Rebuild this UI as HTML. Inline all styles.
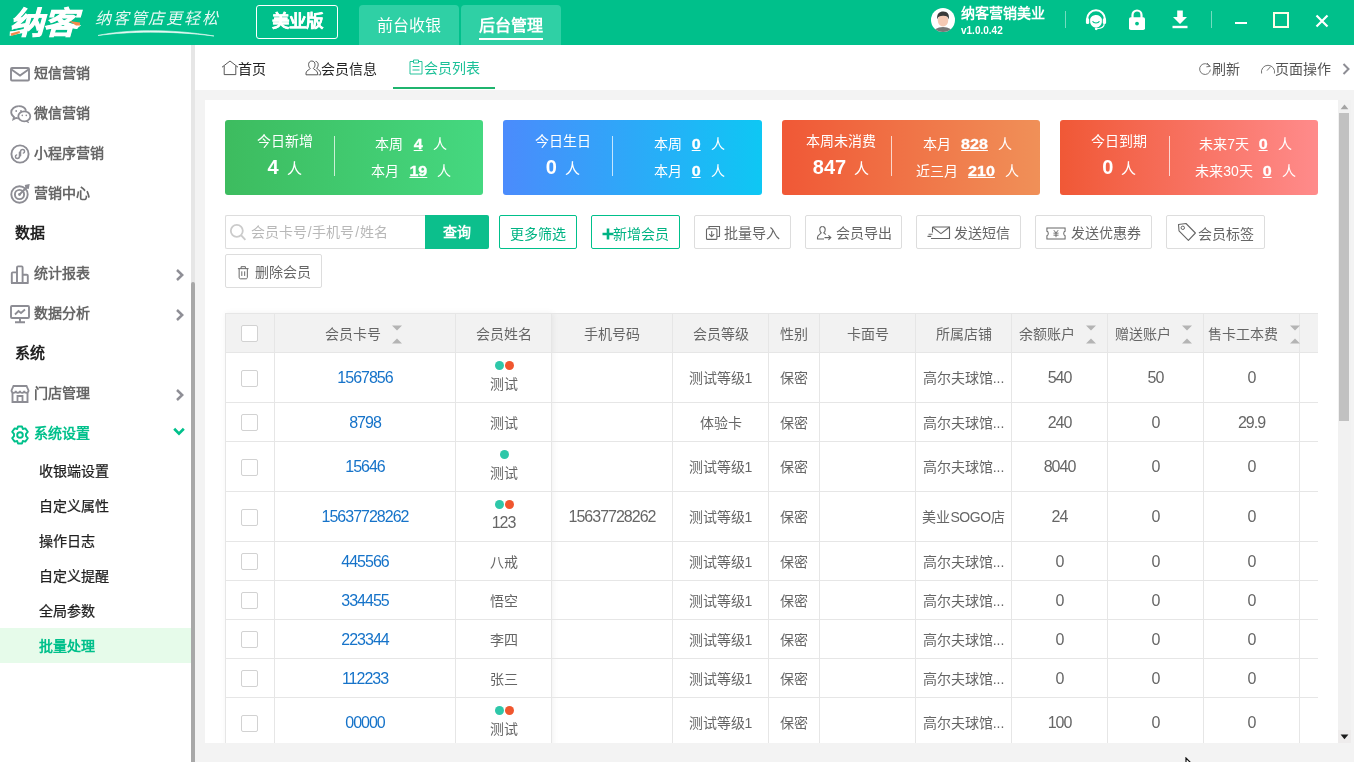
<!DOCTYPE html>
<html lang="zh-CN">
<head>
<meta charset="utf-8">
<title>会员列表</title>
<style>
*{box-sizing:border-box;margin:0;padding:0}
html,body{width:1354px;height:762px;overflow:hidden;background:#f3f3f3;font-family:"Liberation Sans",sans-serif;font-size:14px;color:#666}
.abs{position:absolute}
#top{position:absolute;left:0;top:0;width:1354px;height:45px;background:#00c08b}
#side{position:absolute;left:0;top:45px;width:191px;height:717px;background:#fff}
#split{position:absolute;left:191px;top:45px;width:4px;height:717px;background:#e6e6e6}
#split i{position:absolute;left:0;top:237px;width:4px;height:481px;background:#a8a8a8;border-radius:2px 2px 0 0}
#tabs{position:absolute;left:195px;top:45px;width:1159px;height:45px;background:#fff}
#panel{position:absolute;left:205px;top:100px;width:1133px;height:643px;background:#fff;overflow:hidden}
#vsb{position:absolute;left:1338px;top:100px;width:13px;height:643px;background:#f1f1f1}
#vsb i{position:absolute;left:1px;top:13px;width:10px;height:308px;background:#c1c1c1}
/* top */
.ver{position:absolute;left:256px;top:5px;width:82px;height:34px;border:1px solid #fff;border-radius:3px;color:#fff;font-size:17.5px;font-weight:bold;text-align:center;line-height:31px;-webkit-text-stroke:.3px #fff}
.ttab{position:absolute;top:5px;width:100px;height:40px;background:#2fd0a5;border-radius:4px 4px 0 0;color:#fff;font-size:16px;text-align:center;line-height:42px}
/* side menu */
.mi{position:absolute;left:0;width:191px;height:40px;line-height:40px;font-size:14px;font-weight:bold;color:#666;padding-left:34px}
.mi svg{position:absolute;left:10px;top:11px}
.mh{position:absolute;left:15px;font-size:15px;font-weight:bold;color:#222;height:40px;line-height:40px}
.sub{-webkit-text-stroke:.25px;position:absolute;left:0;width:191px;height:35px;line-height:35px;font-size:14px;color:#222;padding-left:39px;font-weight:500}
.chev{position:absolute;left:175px}
/* cards */
.card{position:absolute;top:20px;height:75px;width:258.25px;border-radius:3px;color:#fff}
.card .l1{position:absolute;left:0;width:119px;text-align:center;top:11px;font-size:14px;line-height:20px}
.card .l2{position:absolute;left:0;width:119px;text-align:center;top:34px;font-size:15px;line-height:26px}
.card .l2 b{font-size:20px;margin-right:8px}
.card .dv{position:absolute;left:109px;top:16px;width:1px;height:40px;background:rgba(255,255,255,.72)}
.card .r{position:absolute;left:112px;width:148px;text-align:center;font-size:14px;line-height:20px}
.card .r b{font-size:15px;text-decoration:underline;margin:0 10.5px;display:inline-block;transform:scaleX(1.07);-webkit-text-stroke:.3px #fff}
/* buttons */
.btn{position:absolute;height:34px;border:1px solid #ddd;border-radius:2px;background:#fff;color:#666;font-size:14px;line-height:32px;text-align:center}
.btn.g{border-color:#00c08b;color:#00b383}
/* table */
.th,.td{position:absolute;text-align:center;font-size:14px;color:#666;overflow:hidden;white-space:nowrap}
a{color:#1673c9;text-decoration:none}
.n{font-size:16px;letter-spacing:-1px}
#panel,#side,#tabs,#top{will-change:transform}
</style>
</head>
<body>
<div id="top">
<div class="abs" id="logo" style="left:9px;top:4px;width:80px;height:40px;color:#fff;font-size:31px;font-weight:900;font-style:italic;line-height:40px;letter-spacing:-1px;white-space:nowrap;transform:scaleX(1.12);transform-origin:0 0;-webkit-text-stroke:0.8px #fff">纳客</div>
<svg class="abs" style="left:0;top:0" width="230" height="45" viewBox="0 0 230 45">
<path d="M10.5 33.5 L19.5 31 L20 33 L11.5 36 Z" fill="#f58a4b"/>
<path d="M69 21 L80 22.5 L80 25.5 L76 25.5 Z" fill="#f58a4b"/>
<path d="M98 35.5 C125 29.5 170 28.5 214 36 C170 30.5 128 31.5 98 35.5 Z" fill="#fff" stroke="#fff" stroke-width=".6" opacity=".9"/>
</svg>
<div class="abs" style="left:95px;top:7.5px;width:130px;height:22px;color:#fff;font-size:16px;font-style:italic;line-height:22px;letter-spacing:1.8px;white-space:nowrap;font-weight:300;opacity:.9">纳客管店更轻松</div>
<div class="ver">美业版</div>
<div class="ttab" style="left:359px">前台收银</div>
<div class="ttab" style="left:461px;font-weight:bold"><span style="border-bottom:2px solid #fff;padding-bottom:4px">后台管理</span></div>
<!-- avatar -->
<svg class="abs" style="left:930px;top:7px" width="26" height="26" viewBox="0 0 26 26">
<defs><clipPath id="avc"><circle cx="13" cy="13" r="12"/></clipPath></defs>
<circle cx="13" cy="13" r="12" fill="#fff"/>
<g clip-path="url(#avc)">
<ellipse cx="13" cy="27" rx="10.5" ry="7" fill="#777"/>
<ellipse cx="13" cy="13.5" rx="5.2" ry="6" fill="#f6c9b4"/>
<path d="M7.2 12.5 C6.5 6 10 4.2 13.5 4.4 C17.5 4.6 19.6 7 18.8 12.5 C18 9.5 16.5 8.7 13 8.8 C9.8 8.8 8 9.5 7.2 12.5Z" fill="#3a3a3a"/>
</g>
</svg>
<div class="abs" style="left:961px;top:3px;color:#fff;font-size:14px;font-weight:bold;line-height:20px;white-space:nowrap">纳客营销美业</div>
<div class="abs" style="left:961px;top:24px;color:#fff;font-size:10px;line-height:14px;white-space:nowrap;font-weight:bold">v1.0.0.42</div>
<div class="abs" style="left:1065px;top:11px;width:1px;height:17px;background:rgba(255,255,255,.45)"></div>
<div class="abs" style="left:1211px;top:11px;width:1px;height:17px;background:rgba(255,255,255,.45)"></div>
<!-- headset -->
<svg class="abs" style="left:1085px;top:8.5px" width="22" height="22.5" viewBox="0 0 24 24">
<path d="M2.2 13.5 V11 A9.8 9.8 0 0 1 21.8 11 V13.5" fill="none" stroke="#fff" stroke-width="2.2"/>
<rect x="1" y="9.8" width="3.6" height="6.4" rx="1.6" fill="#fff"/>
<rect x="19.4" y="9.8" width="3.6" height="6.4" rx="1.6" fill="#fff"/>
<path d="M5.6 10.5 C7 7 10 6.2 12 6.2 C15.5 6.2 17.6 8.2 18.4 10.5 L18.4 14 C18 17.8 15 20 12 20 C9 20 6 17.8 5.6 14 Z" fill="#fff"/>
<path d="M8.2 13.2 C9.5 15.6 14.5 15.6 15.8 13.2" fill="none" stroke="#00c08b" stroke-width="1.2"/>
<path d="M21 15.5 C21 19.5 18 21 13 21.3" fill="none" stroke="#fff" stroke-width="1.3"/>
<circle cx="12.2" cy="21.4" r="1.5" fill="#fff"/>
</svg>
<!-- lock -->
<svg class="abs" style="left:1128px;top:8px" width="18" height="24" viewBox="0 0 18 24">
<path d="M4.5 10 V7 A4.5 4.5 0 0 1 13.5 7 V10" fill="none" stroke="#fff" stroke-width="2.2"/>
<rect x="1" y="9.3" width="16" height="12.7" rx="1.8" fill="#fff"/>
<circle cx="9" cy="15.6" r="1.9" fill="#00c08b"/>
</svg>
<!-- download -->
<svg class="abs" style="left:1171px;top:10px" width="18" height="20" viewBox="0 0 18 20">
<path d="M6.2 0.5 H11.8 V7 H16 L9 14 L2 7 H6.2 Z" fill="#fff"/>
<rect x="1.5" y="15.8" width="15" height="2.4" fill="#fff"/>
</svg>
<!-- window controls -->
<div class="abs" style="left:1235px;top:22px;width:12px;height:2px;background:#fff"></div>
<div class="abs" style="left:1273px;top:12px;width:16px;height:16px;border:2px solid #fdfee8"></div>
<svg class="abs" style="left:1314.6px;top:14.4px" width="14" height="14" viewBox="0 0 14 14"><path d="M1.5 1.5 L12.5 12.5 M12.5 1.5 L1.5 12.5" stroke="#fff" stroke-width="2.2" fill="none"/></svg>
</div>
<div id="side"><div class="mi" style="top:8px;color:#666"><svg width="20" height="20" viewBox="0 0 20 20"><rect x="1" y="4" width="18" height="12.5" rx="1" fill="none" stroke="#8d8d94" stroke-width="1.9"/><path d="M1.5 5.5 L10 11.5 L18.5 5.5" fill="none" stroke="#8d8d94" stroke-width="1.9"/></svg>短信营销</div><div class="mi" style="top:48px;color:#666"><svg width="22" height="20" viewBox="0 0 22 20"><path d="M8.8 2.2 C4.6 2.2 1.2 4.9 1.2 8.3 C1.2 10.2 2.3 11.9 4 13 L3.4 15.2 L6 13.9 C6.6 14.1 7.2 14.2 7.9 14.3" fill="none" stroke="#8d8d94" stroke-width="1.8"/><path d="M8.8 2.2 C12.3 2.2 15.2 4.1 16.1 6.7" fill="none" stroke="#8d8d94" stroke-width="1.8"/><ellipse cx="14.3" cy="12.3" rx="6" ry="5" fill="#fff" stroke="#8d8d94" stroke-width="1.8"/><path d="M17.2 16.6 L18.6 18.6 L16 17.3" fill="#8d8d94" stroke="#8d8d94" stroke-width="1"/><circle cx="6.2" cy="7" r=".9" fill="#8d8d94"/><circle cx="11" cy="7" r=".9" fill="#8d8d94"/><circle cx="12.3" cy="11.4" r=".8" fill="#8d8d94"/><circle cx="16.3" cy="11.4" r=".8" fill="#8d8d94"/></svg>微信营销</div><div class="mi" style="top:88px;color:#666"><svg width="20" height="20" viewBox="0 0 20 20"><circle cx="10" cy="10" r="8.6" fill="none" stroke="#8d8d94" stroke-width="1.9"/><path d="M6.6 10.9 C4.9 11.4 5 14.4 7.2 14.4 C8.6 14.4 9.5 13.4 9.5 12.2 V8.2 M13.4 9.1 C15.1 8.6 15 5.6 12.8 5.6 C11.4 5.6 10.5 6.6 10.5 7.8 V11.8" fill="none" stroke="#8d8d94" stroke-width="1.5" stroke-linecap="round"/></svg>小程序营销</div><div class="mi" style="top:128px;color:#666"><svg width="20" height="20" viewBox="0 0 20 20"><circle cx="9.5" cy="10.5" r="8.2" fill="none" stroke="#8d8d94" stroke-width="1.9"/><circle cx="9.5" cy="10.5" r="4.6" fill="none" stroke="#8d8d94" stroke-width="1.9"/><circle cx="9.5" cy="10.5" r="1.4" fill="#8d8d94"/><path d="M9.5 10.5 L17.5 2.5 M15 2 L18.5 1.2 L17.8 4.8" fill="none" stroke="#8d8d94" stroke-width="1.9"/></svg>营销中心</div><div class="mh" style="top:168px">数据</div><div class="mi" style="top:208px;color:#666"><svg width="20" height="20" viewBox="0 0 20 20"><path d="M1.8 19 V9.4 Q1.8 8.4 2.8 8.4 H7 M7 19 V3.4 Q7 2.4 8 2.4 H11.6 Q12.6 2.4 12.6 3.4 V19 M12.6 10.8 H16.8 Q17.8 10.8 17.8 11.8 V19 M1 19 H18.6" fill="none" stroke="#8d8d94" stroke-width="1.9"/></svg>统计报表</div><svg class="abs" style="left:175px;top:223.5px" width="10" height="12" viewBox="0 0 10 12"><path d="M2 1 L7.2 6 L2 11" fill="none" stroke="#8f8f96" stroke-width="2.5"/></svg><div class="mi" style="top:248px;color:#666"><svg width="20" height="20" viewBox="0 0 20 20"><rect x="1" y="2" width="18" height="12" rx="1" fill="none" stroke="#8d8d94" stroke-width="1.9"/><path d="M10 14 V18 M5 18.3 H15" fill="none" stroke="#8d8d94" stroke-width="1.9"/><path d="M5 10.5 L8.5 7 L11 9 L15 5.5" fill="none" stroke="#8d8d94" stroke-width="1.8"/></svg>数据分析</div><svg class="abs" style="left:175px;top:263.5px" width="10" height="12" viewBox="0 0 10 12"><path d="M2 1 L7.2 6 L2 11" fill="none" stroke="#8f8f96" stroke-width="2.5"/></svg><div class="mh" style="top:288px">系统</div><div class="mi" style="top:328px;color:#666"><svg width="20" height="20" viewBox="0 0 20 20"><path d="M2.5 9 V18 H17.5 V9" fill="none" stroke="#8d8d94" stroke-width="1.9"/><path d="M3.5 2 H16.5 L18.5 6.5 C18.5 9.5 14.3 9.5 14.3 6.8 C14.3 9.5 10 9.5 10 6.8 C10 9.5 5.7 9.5 5.7 6.8 C5.7 9.5 1.5 9.5 1.5 6.5 Z" fill="none" stroke="#8d8d94" stroke-width="1.8"/><path d="M7.5 18 V12 H12.5 V18" fill="none" stroke="#8d8d94" stroke-width="1.8"/></svg>门店管理</div><svg class="abs" style="left:175px;top:343.5px" width="10" height="12" viewBox="0 0 10 12"><path d="M2 1 L7.2 6 L2 11" fill="none" stroke="#8f8f96" stroke-width="2.5"/></svg><div class="mi" style="top:368px;color:#00c08b"><svg style="top:12px" width="20" height="20" viewBox="0 0 20 20"><path d="M8 1.5 H12 L12.8 4 L15.3 3.4 L17.8 6.8 L16 8.8 L16 11.2 L17.8 13.2 L15.3 16.6 L12.8 16 L12 18.5 H8 L7.2 16 L4.7 16.6 L2.2 13.2 L4 11.2 L4 8.8 L2.2 6.8 L4.7 3.4 L7.2 4 Z" fill="none" stroke="#00c08b" stroke-width="1.9" stroke-linejoin="round"/><circle cx="10" cy="10" r="2.8" fill="none" stroke="#00c08b" stroke-width="1.9"/></svg>系统设置</div><svg class="abs" style="left:173px;top:382px" width="12" height="10" viewBox="0 0 12 10"><path d="M1.2 1.8 L6 6.6 L10.8 1.8" fill="none" stroke="#00c08b" stroke-width="2.7"/></svg><div class="sub" style="top:408.5px">收银端设置</div><div class="sub" style="top:443.5px">自定义属性</div><div class="sub" style="top:478.5px">操作日志</div><div class="sub" style="top:513.5px">自定义提醒</div><div class="sub" style="top:548.5px">全局参数</div><div class="sub" style="top:583px;background:#e6fbea;color:#00c08b;font-weight:bold;-webkit-text-stroke:0;line-height:36px">批量处理</div></div>
<div id="split"><i></i></div>
<div id="tabs"><svg class="abs" style="left:26px;top:15px" width="18" height="16" viewBox="0 0 18 16"><path d="M1 7.2 L9 1 L17 7.2 M3.2 6 V14.6 H14.8 V6" fill="none" stroke="#444" stroke-width="0.9"/></svg><div class="abs" style="left:43px;top:13px;line-height:22px;color:#222;white-space:nowrap">首页</div><svg class="abs" style="left:110px;top:15px" width="17" height="16" viewBox="0 0 17 16"><path d="M6.8 1 C4.6 1 3.6 2.6 3.6 4.6 C3.6 6.2 4.2 7.6 5.2 8.4 C5.2 9.6 1 10.4 1 13 V14.8 H12.6 V13 C12.6 10.4 8.4 9.6 8.4 8.4 C9.4 7.6 10 6.2 10 4.6 C10 2.6 9 1 6.8 1 Z" fill="none" stroke="#444" stroke-width="0.9"/><path d="M10.6 1.4 C12.6 1.6 13.2 3.2 13.2 4.8 C13.2 6.2 12.6 7.4 11.8 8.2 C11.8 9.4 15.6 10.2 15.6 12.8 V14.8 H13.6" fill="none" stroke="#444" stroke-width="0.9"/></svg><div class="abs" style="left:126px;top:13px;line-height:22px;color:#222;white-space:nowrap">会员信息</div><svg class="abs" style="left:214px;top:14px" width="14" height="16" viewBox="0 0 14 16"><path d="M4.5 2.5 H1 V15 H13 V2.5 H9.5 M4.5 4 V1 H9.5 V4 Z M3.5 7.5 H10.5 M3.5 11 H10.5" fill="none" stroke="#1cc198" stroke-width="0.95"/></svg><div class="abs" style="left:229px;top:12px;line-height:22px;color:#1cc198;white-space:nowrap">会员列表</div><div class="abs" style="left:198px;top:42px;width:102px;height:2px;background:#1fb46e"></div><svg class="abs" style="left:1003px;top:17px" width="14" height="14" viewBox="0 0 14 14"><path d="M11.6 4.2 A5.4 5.4 0 1 0 12.4 7.6" fill="none" stroke="#666" stroke-width="0.9"/><path d="M9 1 L12.2 4.4 L8.4 4.8" fill="none" stroke="#666" stroke-width="0.9"/></svg><div class="abs" style="left:1017px;top:13px;line-height:22px;color:#555;white-space:nowrap">刷新</div><svg class="abs" style="left:1065px;top:17px" width="16" height="12" viewBox="0 0 16 12"><path d="M1.6 11.5 A6.6 6.6 0 1 1 14.4 11.5" fill="none" stroke="#666" stroke-width="0.9"/><path d="M7 8.6 L10.6 4.6" fill="none" stroke="#666" stroke-width="0.9"/></svg><div class="abs" style="left:1080px;top:13px;line-height:22px;color:#555;white-space:nowrap">页面操作</div><svg class="abs" style="left:1146px;top:17px" width="10" height="14" viewBox="0 0 10 14"><path d="M2.5 2 L7.5 7 L2.5 12" fill="none" stroke="#8d8d94" stroke-width="2"/></svg></div>
<div id="panel"><div class="card" style="left:20px;background:linear-gradient(90deg,#3dbc5f,#45d880)"><div class="l1">今日新增</div><div class="l2"><b>4</b>人</div><div class="dv"></div><div class="r" style="top:14px">本周<b>4</b>人</div><div class="r" style="top:41px">本月<b>19</b>人</div></div><div class="card" style="left:298.25px;background:linear-gradient(90deg,#4b8bfc,#0ec7f4)"><div class="l1">今日生日</div><div class="l2"><b>0</b>人</div><div class="dv"></div><div class="r" style="top:14px">本周<b>0</b>人</div><div class="r" style="top:41px">本月<b>0</b>人</div></div><div class="card" style="left:576.5px;background:linear-gradient(90deg,#f05836,#f09058)"><div class="l1">本周未消费</div><div class="l2"><b>847</b>人</div><div class="dv"></div><div class="r" style="top:14px">本月<b>828</b>人</div><div class="r" style="top:41px">近三月<b>210</b>人</div></div><div class="card" style="left:854.75px;background:linear-gradient(90deg,#f05836,#ff8b8b)"><div class="l1">今日到期</div><div class="l2"><b>0</b>人</div><div class="dv"></div><div class="r" style="top:14px">未来7天<b>0</b>人</div><div class="r" style="top:41px">未来30天<b>0</b>人</div></div><div class="abs" style="left:20px;top:115px;width:201px;height:34px;border:1px solid #ddd;border-right:none;border-radius:2px 0 0 2px;background:#fff"></div><svg class="abs" style="left:24px;top:123px" width="18" height="18" viewBox="0 0 18 18"><circle cx="7.8" cy="7.8" r="6" fill="none" stroke="#cbcbcb" stroke-width="1.8"/><path d="M12 12.2 L16.4 16.8" stroke="#cbcbcb" stroke-width="1.9" fill="none"/></svg><div class="abs" style="left:46px;top:121px;line-height:22px;color:#b8b8b8;white-space:nowrap">会员卡号<span style="margin:0 .8px">/</span>手机号<span style="margin:0 .8px">/</span>姓名</div><div class="abs" style="left:220px;top:115px;width:64px;height:34px;background:#0cbf8c;border-radius:0 2px 2px 0;color:#fff;font-weight:bold;text-align:center;line-height:34px">查询</div><div class="btn g" style="left:294px;top:115px;width:78px"><span style="position:relative;top:2px">更多筛选</span></div><div class="btn g" style="left:386px;top:115px;width:89px"><svg style="position:absolute;left:10px;top:12px" width="12" height="12" viewBox="0 0 12 12"><path d="M6 0.5 V11.5 M0.5 6 H11.5" stroke="#00b383" stroke-width="2.6"/></svg><span style="position:absolute;left:21px;top:2px">新增会员</span></div><div class="btn " style="left:489px;top:115px;width:97px"><svg style="position:absolute;left:10px;top:9px" width="16" height="16" viewBox="0 0 16 16"><path d="M4 3.5 V1.5 H14.5 V11.5 H12" fill="none" stroke="#666" stroke-width="1.1"/><rect x="1.5" y="3.8" width="10.4" height="10.6" rx="1" fill="none" stroke="#666" stroke-width="1.1"/><path d="M6.7 6 V11.6 M4.2 9.2 L6.7 11.8 L9.2 9.2" fill="none" stroke="#666" stroke-width="1.1"/></svg><span style="position:absolute;left:29px;top:1px">批量导入</span></div><div class="btn " style="left:600px;top:115px;width:97px"><svg style="position:absolute;left:10px;top:9px" width="16" height="16" viewBox="0 0 16 16"><path d="M6.5 1.5 C4.6 1.5 3.8 3 3.8 4.6 C3.8 6 4.4 7.2 5.2 7.8 C5.2 9 1.5 9.6 1.5 12.4 V14 H8" fill="none" stroke="#666" stroke-width="1.1"/><path d="M6.5 1.5 C8.4 1.5 9.2 3 9.2 4.6 C9.2 6 8.6 7.2 7.8 7.8 C7.8 8.6 9 9 10 9.4" fill="none" stroke="#666" stroke-width="1.1"/><path d="M8.5 12.6 H14.6 M12.4 10.4 L14.8 12.6 L12.4 14.8" fill="none" stroke="#666" stroke-width="1.1"/></svg><span style="position:absolute;left:30px;top:1px">会员导出</span></div><div class="btn " style="left:711px;top:115px;width:105px"><svg style="position:absolute;left:10px;top:9px" width="24" height="16" viewBox="0 0 24 16"><path d="M5.5 2 H22.5 V13.5 H4 M5.5 2 V7.5" fill="none" stroke="#666" stroke-width="1.1"/><path d="M5.8 2.3 L14 8.6 L22.2 2.3" fill="none" stroke="#666" stroke-width="1.1"/><path d="M1.5 9.2 H5.5 M0.5 11.4 H4.2" fill="none" stroke="#666" stroke-width="1.1"/></svg><span style="position:absolute;left:37px;top:1px">发送短信</span></div><div class="btn " style="left:830px;top:115px;width:117px"><svg style="position:absolute;left:10px;top:10.5px" width="20" height="13" viewBox="0 0 22 14" preserveAspectRatio="none"><path d="M1 1 H21 V4.6 C19 5 19 9 21 9.4 V13 H1 V9.4 C3 9 3 5 1 4.6 Z" fill="none" stroke="#666" stroke-width="1.1"/><path d="M8.6 3.4 L11 6.4 L13.4 3.4 M11 6.4 V11 M8.2 6.6 H13.8 M8.2 8.8 H13.8" fill="none" stroke="#666" stroke-width="1"/></svg><span style="position:absolute;left:34.5px;top:1px">发送优惠券</span></div><div class="btn " style="left:961px;top:115px;width:99px"><svg style="position:absolute;left:10px;top:6px" width="20" height="20" viewBox="0 0 20 20"><path d="M1.5 2.5 L9 1.5 L18.4 11 L11.4 18.4 L2 8.8 Z" fill="none" stroke="#666" stroke-width="1.1" stroke-linejoin="round"/><circle cx="5.8" cy="5.8" r="1.7" fill="none" stroke="#666" stroke-width="1"/></svg><span style="position:absolute;left:31px;top:2px">会员标签</span></div><div class="btn " style="left:20px;top:154px;width:97px"><svg style="position:absolute;left:11px;top:9.5px" width="12.5" height="15.5" viewBox="0 0 14 16"><path d="M1 3.4 H13 M4.6 3.2 V1.2 H9.4 V3.2 M2.4 3.6 V13 C2.4 14.2 3 14.8 4 14.8 H10 C11 14.8 11.6 14.2 11.6 13 V3.6 M5.4 6.4 V11.6 M8.6 6.4 V11.6" fill="none" stroke="#666" stroke-width="1.1"/></svg><span style="position:absolute;left:29px;top:1px">删除会员</span></div><div class="abs" style="left:20px;top:213px;width:1093px;height:40px;background:#f2f2f2"></div><div class="abs" style="left:20px;top:213px;width:327px;height:440px;box-shadow:1px 0 6px rgba(0,0,0,.06)"></div><div class="abs" style="left:21px;top:253px;width:325px;height:440px;background:#fff"></div><div class="abs" style="left:20px;top:213px;width:1093px;height:1px;background:#e6e6e6"></div><div class="abs" style="left:20px;top:252px;width:1093px;height:1px;background:#e6e6e6"></div><div class="abs" style="left:20px;top:302px;width:1093px;height:1px;background:#e6e6e6"></div><div class="abs" style="left:20px;top:341px;width:1093px;height:1px;background:#e6e6e6"></div><div class="abs" style="left:20px;top:391px;width:1093px;height:1px;background:#e6e6e6"></div><div class="abs" style="left:20px;top:441px;width:1093px;height:1px;background:#e6e6e6"></div><div class="abs" style="left:20px;top:480px;width:1093px;height:1px;background:#e6e6e6"></div><div class="abs" style="left:20px;top:519px;width:1093px;height:1px;background:#e6e6e6"></div><div class="abs" style="left:20px;top:558px;width:1093px;height:1px;background:#e6e6e6"></div><div class="abs" style="left:20px;top:597px;width:1093px;height:1px;background:#e6e6e6"></div><div class="abs" style="left:20px;top:647px;width:1093px;height:1px;background:#e6e6e6"></div><div class="abs" style="left:20px;top:213px;width:1px;height:440px;background:#e6e6e6"></div><div class="abs" style="left:69px;top:213px;width:1px;height:440px;background:#e6e6e6"></div><div class="abs" style="left:250px;top:213px;width:1px;height:440px;background:#e6e6e6"></div><div class="abs" style="left:346px;top:213px;width:1px;height:440px;background:#e6e6e6"></div><div class="abs" style="left:467px;top:213px;width:1px;height:440px;background:#e6e6e6"></div><div class="abs" style="left:563px;top:213px;width:1px;height:440px;background:#e6e6e6"></div><div class="abs" style="left:614px;top:213px;width:1px;height:440px;background:#e6e6e6"></div><div class="abs" style="left:710px;top:213px;width:1px;height:440px;background:#e6e6e6"></div><div class="abs" style="left:806px;top:213px;width:1px;height:440px;background:#e6e6e6"></div><div class="abs" style="left:902px;top:213px;width:1px;height:440px;background:#e6e6e6"></div><div class="abs" style="left:998px;top:213px;width:1px;height:440px;background:#e6e6e6"></div><div class="abs" style="left:1094px;top:213px;width:1px;height:440px;background:#e6e6e6"></div><div class="abs" style="left:36px;top:225.0px;width:17px;height:17px;border:1px solid #d2d2d2;border-radius:2px;background:#fff"></div><div class="th" style="left:119.5px;top:222.5px;width:58px;text-align:left;line-height:22px;overflow:visible">会员卡号</div><svg class="abs" style="left:187.0px;top:225.0px" width="10" height="19" viewBox="0 0 10 19"><path d="M0 0.5 H10 L5 5.5 Z M0 18.5 H10 L5 13.5 Z" fill="#b4b4b4"/></svg><div class="th" style="left:251px;top:222.5px;width:95px;line-height:22px">会员姓名</div><div class="th" style="left:347px;top:222.5px;width:120px;line-height:22px">手机号码</div><div class="th" style="left:468px;top:222.5px;width:95px;line-height:22px">会员等级</div><div class="th" style="left:564px;top:222.5px;width:50px;line-height:22px">性别</div><div class="th" style="left:615px;top:222.5px;width:95px;line-height:22px">卡面号</div><div class="th" style="left:711px;top:222.5px;width:95px;line-height:22px">所属店铺</div><div class="th" style="left:813.5px;top:222.5px;width:58px;text-align:left;line-height:22px;overflow:visible">余额账户</div><svg class="abs" style="left:881.0px;top:225.0px" width="10" height="19" viewBox="0 0 10 19"><path d="M0 0.5 H10 L5 5.5 Z M0 18.5 H10 L5 13.5 Z" fill="#b4b4b4"/></svg><div class="th" style="left:909.5px;top:222.5px;width:58px;text-align:left;line-height:22px;overflow:visible">赠送账户</div><svg class="abs" style="left:977.0px;top:225.0px" width="10" height="19" viewBox="0 0 10 19"><path d="M0 0.5 H10 L5 5.5 Z M0 18.5 H10 L5 13.5 Z" fill="#b4b4b4"/></svg><div class="th" style="left:1003.0px;top:222.5px;width:72px;text-align:left;line-height:22px;overflow:visible">售卡工本费</div><svg class="abs" style="left:1084.5px;top:225.0px" width="10" height="19" viewBox="0 0 10 19"><path d="M0 0.5 H10 L5 5.5 Z M0 18.5 H10 L5 13.5 Z" fill="#b4b4b4"/></svg><div class="abs" style="left:36px;top:269.5px;width:17px;height:17px;border:1px solid #d2d2d2;border-radius:2px;background:#fff"></div><div class="td n" style="left:70px;top:267.0px;width:180px;line-height:21px;"><a>1567856</a></div><div class="abs" style="left:289.5px;top:261px;width:9px;height:9px;border-radius:50%;background:#2ec7a9"></div><div class="abs" style="left:299.5px;top:261px;width:9px;height:9px;border-radius:50%;background:#f0562e"></div><div class="td" style="left:251px;top:273px;width:95px;line-height:22px;">测试</div><div class="td" style="left:347px;top:267.0px;width:120px;line-height:22px;"></div><div class="td" style="left:468px;top:267.0px;width:95px;line-height:22px;">测试等级1</div><div class="td" style="left:564px;top:267.0px;width:50px;line-height:22px;">保密</div><div class="td" style="left:711px;top:267.0px;width:95px;line-height:22px;">高尔夫球馆...</div><div class="td n" style="left:807px;top:267.0px;width:95px;line-height:21px;">540</div><div class="td n" style="left:903px;top:267.0px;width:95px;line-height:21px;">50</div><div class="td n" style="left:999px;top:267.0px;width:95px;line-height:21px;">0</div><div class="abs" style="left:36px;top:314.0px;width:17px;height:17px;border:1px solid #d2d2d2;border-radius:2px;background:#fff"></div><div class="td n" style="left:70px;top:311.5px;width:180px;line-height:21px;"><a>8798</a></div><div class="td" style="left:251px;top:311.5px;width:95px;line-height:22px;">测试</div><div class="td" style="left:347px;top:311.5px;width:120px;line-height:22px;"></div><div class="td" style="left:468px;top:311.5px;width:95px;line-height:22px;">体验卡</div><div class="td" style="left:564px;top:311.5px;width:50px;line-height:22px;">保密</div><div class="td" style="left:711px;top:311.5px;width:95px;line-height:22px;">高尔夫球馆...</div><div class="td n" style="left:807px;top:311.5px;width:95px;line-height:21px;">240</div><div class="td n" style="left:903px;top:311.5px;width:95px;line-height:21px;">0</div><div class="td n" style="left:999px;top:311.5px;width:95px;line-height:21px;">29.9</div><div class="abs" style="left:36px;top:358.5px;width:17px;height:17px;border:1px solid #d2d2d2;border-radius:2px;background:#fff"></div><div class="td n" style="left:70px;top:356.0px;width:180px;line-height:21px;"><a>15646</a></div><div class="abs" style="left:294.5px;top:350px;width:9px;height:9px;border-radius:50%;background:#2ec7a9"></div><div class="td" style="left:251px;top:362px;width:95px;line-height:22px;">测试</div><div class="td" style="left:347px;top:356.0px;width:120px;line-height:22px;"></div><div class="td" style="left:468px;top:356.0px;width:95px;line-height:22px;">测试等级1</div><div class="td" style="left:564px;top:356.0px;width:50px;line-height:22px;">保密</div><div class="td" style="left:711px;top:356.0px;width:95px;line-height:22px;">高尔夫球馆...</div><div class="td n" style="left:807px;top:356.0px;width:95px;line-height:21px;">8040</div><div class="td n" style="left:903px;top:356.0px;width:95px;line-height:21px;">0</div><div class="td n" style="left:999px;top:356.0px;width:95px;line-height:21px;">0</div><div class="abs" style="left:36px;top:408.5px;width:17px;height:17px;border:1px solid #d2d2d2;border-radius:2px;background:#fff"></div><div class="td n" style="left:70px;top:406.0px;width:180px;line-height:21px;"><a>15637728262</a></div><div class="abs" style="left:289.5px;top:400px;width:9px;height:9px;border-radius:50%;background:#2ec7a9"></div><div class="abs" style="left:299.5px;top:400px;width:9px;height:9px;border-radius:50%;background:#f0562e"></div><div class="td n" style="left:251px;top:412px;width:95px;line-height:21px;">123</div><div class="td n" style="left:347px;top:406.0px;width:120px;line-height:21px;">15637728262</div><div class="td" style="left:468px;top:406.0px;width:95px;line-height:22px;">测试等级1</div><div class="td" style="left:564px;top:406.0px;width:50px;line-height:22px;">保密</div><div class="td" style="left:711px;top:406.0px;width:95px;line-height:22px;">美业<span style="letter-spacing:-.45px">SOGO</span>店</div><div class="td n" style="left:807px;top:406.0px;width:95px;line-height:21px;">24</div><div class="td n" style="left:903px;top:406.0px;width:95px;line-height:21px;">0</div><div class="td n" style="left:999px;top:406.0px;width:95px;line-height:21px;">0</div><div class="abs" style="left:36px;top:453.0px;width:17px;height:17px;border:1px solid #d2d2d2;border-radius:2px;background:#fff"></div><div class="td n" style="left:70px;top:450.5px;width:180px;line-height:21px;"><a>445566</a></div><div class="td" style="left:251px;top:450.5px;width:95px;line-height:22px;">八戒</div><div class="td" style="left:347px;top:450.5px;width:120px;line-height:22px;"></div><div class="td" style="left:468px;top:450.5px;width:95px;line-height:22px;">测试等级1</div><div class="td" style="left:564px;top:450.5px;width:50px;line-height:22px;">保密</div><div class="td" style="left:711px;top:450.5px;width:95px;line-height:22px;">高尔夫球馆...</div><div class="td n" style="left:807px;top:450.5px;width:95px;line-height:21px;">0</div><div class="td n" style="left:903px;top:450.5px;width:95px;line-height:21px;">0</div><div class="td n" style="left:999px;top:450.5px;width:95px;line-height:21px;">0</div><div class="abs" style="left:36px;top:492.0px;width:17px;height:17px;border:1px solid #d2d2d2;border-radius:2px;background:#fff"></div><div class="td n" style="left:70px;top:489.5px;width:180px;line-height:21px;"><a>334455</a></div><div class="td" style="left:251px;top:489.5px;width:95px;line-height:22px;">悟空</div><div class="td" style="left:347px;top:489.5px;width:120px;line-height:22px;"></div><div class="td" style="left:468px;top:489.5px;width:95px;line-height:22px;">测试等级1</div><div class="td" style="left:564px;top:489.5px;width:50px;line-height:22px;">保密</div><div class="td" style="left:711px;top:489.5px;width:95px;line-height:22px;">高尔夫球馆...</div><div class="td n" style="left:807px;top:489.5px;width:95px;line-height:21px;">0</div><div class="td n" style="left:903px;top:489.5px;width:95px;line-height:21px;">0</div><div class="td n" style="left:999px;top:489.5px;width:95px;line-height:21px;">0</div><div class="abs" style="left:36px;top:531.0px;width:17px;height:17px;border:1px solid #d2d2d2;border-radius:2px;background:#fff"></div><div class="td n" style="left:70px;top:528.5px;width:180px;line-height:21px;"><a>223344</a></div><div class="td" style="left:251px;top:528.5px;width:95px;line-height:22px;">李四</div><div class="td" style="left:347px;top:528.5px;width:120px;line-height:22px;"></div><div class="td" style="left:468px;top:528.5px;width:95px;line-height:22px;">测试等级1</div><div class="td" style="left:564px;top:528.5px;width:50px;line-height:22px;">保密</div><div class="td" style="left:711px;top:528.5px;width:95px;line-height:22px;">高尔夫球馆...</div><div class="td n" style="left:807px;top:528.5px;width:95px;line-height:21px;">0</div><div class="td n" style="left:903px;top:528.5px;width:95px;line-height:21px;">0</div><div class="td n" style="left:999px;top:528.5px;width:95px;line-height:21px;">0</div><div class="abs" style="left:36px;top:570.0px;width:17px;height:17px;border:1px solid #d2d2d2;border-radius:2px;background:#fff"></div><div class="td n" style="left:70px;top:567.5px;width:180px;line-height:21px;"><a>112233</a></div><div class="td" style="left:251px;top:567.5px;width:95px;line-height:22px;">张三</div><div class="td" style="left:347px;top:567.5px;width:120px;line-height:22px;"></div><div class="td" style="left:468px;top:567.5px;width:95px;line-height:22px;">测试等级1</div><div class="td" style="left:564px;top:567.5px;width:50px;line-height:22px;">保密</div><div class="td" style="left:711px;top:567.5px;width:95px;line-height:22px;">高尔夫球馆...</div><div class="td n" style="left:807px;top:567.5px;width:95px;line-height:21px;">0</div><div class="td n" style="left:903px;top:567.5px;width:95px;line-height:21px;">0</div><div class="td n" style="left:999px;top:567.5px;width:95px;line-height:21px;">0</div><div class="abs" style="left:36px;top:614.5px;width:17px;height:17px;border:1px solid #d2d2d2;border-radius:2px;background:#fff"></div><div class="td n" style="left:70px;top:612.0px;width:180px;line-height:21px;"><a>00000</a></div><div class="abs" style="left:289.5px;top:606px;width:9px;height:9px;border-radius:50%;background:#2ec7a9"></div><div class="abs" style="left:299.5px;top:606px;width:9px;height:9px;border-radius:50%;background:#f0562e"></div><div class="td" style="left:251px;top:618px;width:95px;line-height:22px;">测试</div><div class="td" style="left:347px;top:612.0px;width:120px;line-height:22px;"></div><div class="td" style="left:468px;top:612.0px;width:95px;line-height:22px;">测试等级1</div><div class="td" style="left:564px;top:612.0px;width:50px;line-height:22px;">保密</div><div class="td" style="left:711px;top:612.0px;width:95px;line-height:22px;">高尔夫球馆...</div><div class="td n" style="left:807px;top:612.0px;width:95px;line-height:21px;">100</div><div class="td n" style="left:903px;top:612.0px;width:95px;line-height:21px;">0</div><div class="td n" style="left:999px;top:612.0px;width:95px;line-height:21px;">0</div></div>
<div id="vsb"><i></i>
<svg class="abs" style="left:0;top:0" width="13" height="13" viewBox="0 0 13 13"><path d="M2.6 9.2 L6.5 4.6 L10.4 9.2 Z" fill="#a3a3a3"/></svg>
<svg class="abs" style="left:0;top:630px" width="13" height="13" viewBox="0 0 13 13"><rect width="13" height="13" fill="#eeecec"/><path d="M2.6 4.6 L6.5 9.2 L10.4 4.6 Z" fill="#1a1a1a"/></svg>
</div>
<svg class="abs" style="left:1185px;top:756.6px" width="14" height="22" viewBox="0 0 14 22"><path d="M1 1 V17 L4.8 13.4 L7.6 19.6 L10 18.6 L7.2 12.6 H12.4 Z" fill="#fff" stroke="#111" stroke-width="1.2"/></svg>
</body>
</html>
